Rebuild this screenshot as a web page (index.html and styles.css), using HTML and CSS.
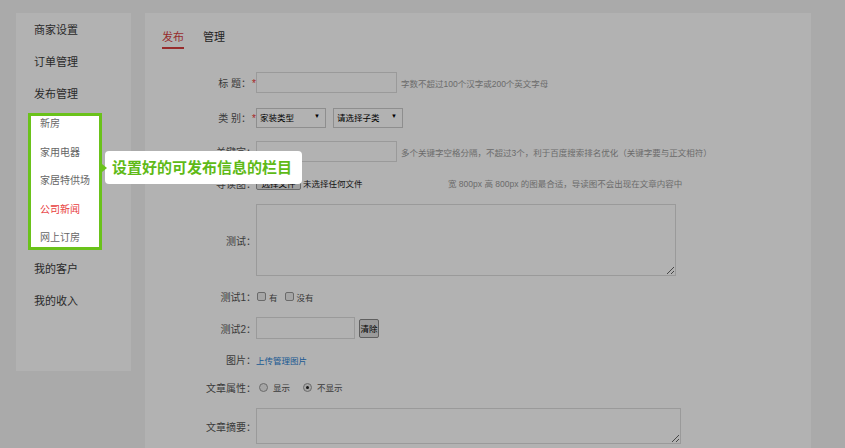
FILE: index.html
```html
<!DOCTYPE html>
<html lang="zh-CN">

<head>
    <meta charset="UTF-8">
    <meta name="viewport" content="width=device-width, initial-scale=1.0">
    <title>发布管理</title>
    <link rel="stylesheet" href="styles.css">
</head>

<body>

    <div class="wrap">
        <div class="side">
            <a class="menu" href="#">商家设置</a>
            <a class="menu" href="#">订单管理</a>
            <a class="menu" href="#">发布管理</a>

            <div class="sub">
                <a href="#">新房</a>
                <a href="#">家用电器</a>
                <a href="#">家居特供场</a>
                <a href="#" class="on">公司新闻</a>
                <a href="#">网上订房</a>

                <div class="tip">设置好的可发布信息的栏目</div>
            </div>

            <a class="menu" href="#">我的客户</a>
            <a class="menu" href="#">我的收入</a>
        </div>

        <div class="main">
            <div class="tabs">
                <a href="#" class="tab active">发布</a>
                <a href="#" class="tab">管理</a>
            </div>

            <div class="form">
                <div class="row h21">
                    <label class="lbl">标 题：<em>*</em></label>
                    <input type="text" class="txt w140">
                    <span class="hint">字数不超过100个汉字或200个英文字母</span>
                </div>

                <div class="row h20">
                    <label class="lbl">类 别：<em>*</em></label>
                    <span class="sel">
                        <select><option>家装类型</option></select>
                    </span>
                    <span class="sel">
                        <select><option>请选择子类</option></select>
                    </span>
                </div>

                <div class="row h21">
                    <label class="lbl">关键字：</label>
                    <input type="text" class="txt w140">
                    <span class="hint">多个关键字空格分隔，不超过3个，利于百度搜索排名优化（关键字要与正文相符）</span>
                </div>

                <div class="row h14">
                    <label class="lbl">导读图：</label>
                    <span class="file"><button class="file-btn">选择文件</button>未选择任何文件</span>
                    <span class="hint">宽 800px 高 800px 的图最合适，导读图不会出现在文章内容中</span>
                </div>

                <div class="row h72">
                    <label class="lbl">测试：</label>
                    <textarea class="area big"></textarea>
                </div>

                <div class="row h13">
                    <label class="lbl">测试1：</label>
                    <label class="opt"><input type="checkbox">有</label>
                    <label class="opt"><input type="checkbox">没有</label>
                </div>

                <div class="row h22">
                    <label class="lbl">测试2：</label>
                    <input type="text" class="txt w99">
                    <button class="clear">清除</button>
                </div>

                <div class="row h13">
                    <label class="lbl">图片：</label>
                    <a href="#" class="link">上传管理图片</a>
                </div>

                <div class="row h14">
                    <label class="lbl">文章属性：</label>
                    <label class="opt radio"><input type="radio" name="show">显示</label>
                    <label class="opt radio"><input type="radio" name="show" checked>不显示</label>
                </div>

                <div class="row h36">
                    <label class="lbl">文章摘要：</label>
                    <textarea class="area small"></textarea>
                </div>
            </div>
        </div>
    </div>

    <div class="mask"></div>

</body>

</html>
```

FILE: styles.css
```css
* {
    margin: 0;
    padding: 0;
    box-sizing: border-box;
}

body {
    background-color: #f4f4f4;
    font-family: "Liberation Sans", "Noto Sans CJK SC", sans-serif;
    color: #444;
    overflow: hidden;
}

a {
    text-decoration: none;
}

.wrap {
    display: flex;
    align-items: flex-start;
    gap: 14px;
    padding: 13px 0 0 16px;
}

/* left menu */
.side {
    width: 115px;
    height: 358px;
    background-color: #fff;
    padding-top: 1px;
    display: flex;
    flex-direction: column;
}

.menu {
    height: 32px;
    line-height: 32px;
    padding-left: 18px;
    font-size: 11px;
    color: #3c3c3c;
}

.sub {
    position: relative;
    z-index: 11;
    width: 74px;
    margin: 3px 0 3px 12px;
    padding: 0 0 1px 9px;
    background-color: #fff;
    border: 3px solid #6ac21a;
    display: flex;
    flex-direction: column;
    gap: 12.5px;
}

.sub a {
    line-height: 16px;
    font-size: 10px;
    color: #666;
}

.sub a.on {
    color: #e8403e;
}

.tip {
    position: absolute;
    left: 74px;
    top: 35px;
    height: 33px;
    line-height: 33px;
    padding: 0 10px 0 7px;
    background-color: #fff;
    border-radius: 4px;
    white-space: nowrap;
    font-size: 15px;
    font-weight: bold;
    color: #5fba17;
}

.tip::before {
    content: "";
    position: absolute;
    left: -3px;
    top: 50%;
    margin-top: -4px;
    border-left: 5px solid #6ac21a;
    border-top: 4px solid transparent;
    border-bottom: 4px solid transparent;
}

/* right content */
.main {
    width: 666px;
    min-height: 470px;
    background-color: #fff;
    padding: 17px 17px 0;
}

.tabs {
    display: flex;
    gap: 19px;
}

.tab {
    width: 22px;
    line-height: 15px;
    padding-bottom: 2px;
    border-bottom: 2px solid transparent;
    font-size: 11px;
    color: #333;
}

.tab.active {
    color: #d8403f;
    border-bottom-color: #d8403f;
}

.form {
    margin-top: 23px;
    display: flex;
    flex-direction: column;
    gap: 14px;
}

.row {
    display: flex;
    align-items: center;
}

.h13 { height: 13px; }
.h14 { height: 14px; }
.h20 { height: 20px; }
.h21 { height: 21px; }
.h22 { height: 22px; }
.h36 { height: 36px; }
.h72 { height: 72px; }

.lbl {
    width: 94px;
    flex-shrink: 0;
    text-align: right;
    font-size: 10px;
    color: #555;
    white-space: nowrap;
}

.lbl em {
    font-style: normal;
    color: #e33;
    font-size: 10px;
    padding-left: 1px;
}

.txt {
    height: 100%;
    border: 1px solid #ddd;
    background-color: #fff;
    outline: none;
}

.w140 { width: 141px; }
.w99 { width: 99px; }

.hint {
    margin-left: 4px;
    font-size: 8.5px;
    color: #9a9a9a;
    white-space: nowrap;
}

.sel {
    position: relative;
    margin-right: 7px;
}

.sel select {
    appearance: none;
    width: 70px;
    height: 20px;
    border: 1px solid #ccc;
    background-color: #fff;
    padding-left: 3px;
    font-family: inherit;
    font-size: 8.5px;
    color: #000;
}

.sel::after {
    content: "▼";
    position: absolute;
    right: 6px;
    top: 6px;
    font-size: 6px;
    color: #000;
    pointer-events: none;
}

.file {
    width: 192px;
    font-size: 8.5px;
    color: #222;
    display: flex;
    align-items: center;
    gap: 2px;
}

.file-btn {
    width: 45px;
    height: 14px;
    background-color: #e6e6e6;
    border: 1px solid #999;
    border-radius: 2px;
    font-family: inherit;
    font-size: 8.5px;
    color: #000;
}

.file + .hint {
    margin-left: 0;
}

.area {
    height: 100%;
    border: 1px solid #ddd;
    background-color: #fff;
    outline: none;
}

.area.big { width: 420px; }
.area.small { width: 425px; }

.opt {
    display: flex;
    align-items: center;
    font-size: 8.5px;
    color: #555;
    margin-right: 6px;
}

.opt input {
    appearance: none;
    width: 9px;
    height: 9px;
    margin: 0 3px 0 1px;
    border: 1px solid #999;
    border-radius: 2px;
    background-color: #eee;
    position: relative;
}

.opt.radio {
    margin-right: 10px;
}

.opt.radio input {
    border-radius: 50%;
    margin: 0 5px 0 3px;
}

.opt.radio input:checked::after {
    content: "";
    position: absolute;
    left: 2px;
    top: 2px;
    width: 3px;
    height: 3px;
    border-radius: 50%;
    background-color: #222;
}

.clear {
    width: 20px;
    height: 19px;
    margin-left: 4px;
    background-color: #ddd;
    border: 1px solid #888;
    border-radius: 2px;
    font-family: inherit;
    font-size: 8.5px;
    color: #000;
    padding: 0;
}

.link {
    font-size: 8.5px;
    color: #2a7fd2;
}

/* dark layer over the page, the sub menu sits above it */
.mask {
    position: fixed;
    top: 0;
    left: 0;
    right: 0;
    bottom: 0;
    background-color: rgba(0, 0, 0, 0.3);
    z-index: 10;
}
```
